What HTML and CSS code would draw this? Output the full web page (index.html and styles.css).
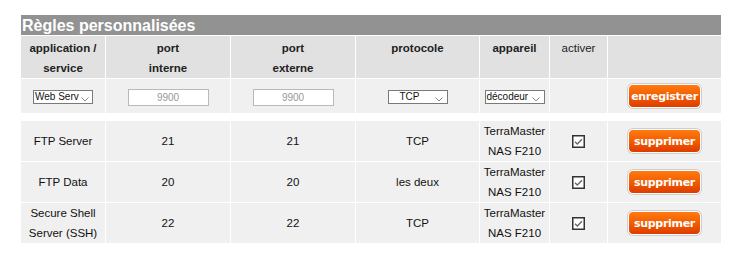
FILE: index.html
```html
<!DOCTYPE html>
<html lang="fr">
<head>
<meta charset="utf-8">
<title>Règles personnalisées</title>
<link rel="stylesheet" href="styles.css">
</head>
<body>
<div class="panel">
  <div class="panel-title">Règles personnalisées</div>
  <table class="rules rules-head">
    <colgroup>
      <col class="c-app"><col class="c-pin"><col class="c-pex"><col class="c-proto"><col class="c-dev"><col class="c-act"><col class="c-btn">
    </colgroup>
    <tr class="head-row">
      <th>application /<br>service</th>
      <th>port<br>interne</th>
      <th>port<br>externe</th>
      <th>protocole</th>
      <th>appareil</th>
      <th class="light">activer</th>
      <th></th>
    </tr>
    <tr class="input-row">
      <td><span class="select s-app"><span class="select-text">Web Serv</span><svg class="chev" viewBox="0 0 8 5" width="8" height="5"><path d="M0.5 0.5 L4 4 L7.5 0.5" fill="none" stroke="#8a8a8a" stroke-width="1"/></svg></span></td>
      <td><span class="port-input">9900</span></td>
      <td><span class="port-input">9900</span></td>
      <td><span class="select s-proto"><span class="select-text">TCP</span><svg class="chev" viewBox="0 0 8 5" width="8" height="5"><path d="M0.5 0.5 L4 4 L7.5 0.5" fill="none" stroke="#8a8a8a" stroke-width="1"/></svg></span></td>
      <td><span class="select s-dev"><span class="select-text">décodeur</span><svg class="chev" viewBox="0 0 8 5" width="8" height="5"><path d="M0.5 0.5 L4 4 L7.5 0.5" fill="none" stroke="#8a8a8a" stroke-width="1"/></svg></span></td>
      <td></td>
      <td><button class="btn">enregistrer</button></td>
    </tr>
  </table>
  <table class="rules rules-body">
    <colgroup>
      <col class="c-app"><col class="c-pin"><col class="c-pex"><col class="c-proto"><col class="c-dev"><col class="c-act"><col class="c-btn">
    </colgroup>
    <tr>
      <td>FTP Server</td><td>21</td><td>21</td><td>TCP</td><td>TerraMaster<br>NAS F210</td>
      <td><span class="check"><svg viewBox="0 0 13 13" width="13" height="13"><rect x="0.75" y="0.75" width="11.5" height="11.5" fill="#fff" stroke="#333" stroke-width="1.5"/><path d="M3 6.8 L5.3 9 L10 4.3" fill="none" stroke="#666" stroke-width="1.4"/></svg></span></td>
      <td><button class="btn">supprimer</button></td>
    </tr>
    <tr>
      <td>FTP Data</td><td>20</td><td>20</td><td>les deux</td><td>TerraMaster<br>NAS F210</td>
      <td><span class="check"><svg viewBox="0 0 13 13" width="13" height="13"><rect x="0.75" y="0.75" width="11.5" height="11.5" fill="#fff" stroke="#333" stroke-width="1.5"/><path d="M3 6.8 L5.3 9 L10 4.3" fill="none" stroke="#666" stroke-width="1.4"/></svg></span></td>
      <td><button class="btn">supprimer</button></td>
    </tr>
    <tr>
      <td>Secure Shell<br>Server (SSH)</td><td>22</td><td>22</td><td>TCP</td><td>TerraMaster<br>NAS F210</td>
      <td><span class="check"><svg viewBox="0 0 13 13" width="13" height="13"><rect x="0.75" y="0.75" width="11.5" height="11.5" fill="#fff" stroke="#333" stroke-width="1.5"/><path d="M3 6.8 L5.3 9 L10 4.3" fill="none" stroke="#666" stroke-width="1.4"/></svg></span></td>
      <td><button class="btn">supprimer</button></td>
    </tr>
  </table>
</div>
</body>
</html>
```

FILE: styles.css
```css
html, body {
  margin: 0;
  padding: 0;
  background: #fff;
}

body {
  font-family: "Liberation Sans", Arial, sans-serif;
  font-size: 11px;
  color: #111;
}

.panel {
  width: 700px;
  margin: 15px 0 0 21px;
}

.panel-title {
  height: 20px;
  line-height: 21px;
  background: #929292;
  color: #fff;
  font-weight: bold;
  font-size: 16px;
  padding-left: 1px;
  white-space: nowrap;
}

.rules {
  width: 702px;
  margin: 0 -1px;
  border-collapse: separate;
  border-spacing: 1px;
  table-layout: fixed;
}

.c-app { width: 84px; }
.c-pin { width: 124px; }
.c-pex { width: 124px; }
.c-proto { width: 123px; }
.c-dev { width: 69px; }
.c-act { width: 57px; }
.c-btn { width: 113px; }

.rules th,
.rules td {
  padding: 0;
  text-align: center;
  line-height: 20px;
}

.head-row th {
  background: #e1e1e1;
  height: 40px;
  padding-top: 2px;
  vertical-align: top;
  font-weight: bold;
  font-size: 11.5px;
  color: #222;
}

.head-row th.light {
  font-weight: normal;
}

.input-row td {
  background: #f0f0f0;
  height: 34px;
  vertical-align: middle;
}

.rules-body {
  margin-top: 6px;
}

.rules-body td {
  background: #f0f0f0;
  height: 40px;
  vertical-align: middle;
  color: #111;
  font-size: 11.5px;
}

.select {
  display: inline-flex;
  align-items: center;
  box-sizing: border-box;
  width: 60px;
  height: 14px;
  border: 1px solid #7a7a7a;
  background: #fff;
  vertical-align: middle;
  font-size: 10px;
  line-height: 12px;
  color: #111;
  overflow: hidden;
}

.select-text {
  flex: 1;
  white-space: nowrap;
  text-align: left;
  padding-left: 1px;
}

.s-proto .select-text {
  padding-left: 11px;
}

.chev {
  flex: none;
  margin: 5px 4px 0 2px;
}

.port-input {
  display: inline-block;
  box-sizing: border-box;
  width: 81px;
  height: 17px;
  border: 1px solid #b9b9b9;
  background: #fff;
  color: #999;
  font-size: 10px;
  line-height: 15px;
  text-align: center;
  vertical-align: middle;
}

.btn {
  box-sizing: border-box;
  width: 73px;
  height: 24px;
  padding: 0;
  border: 1px solid #fff;
  border-radius: 5px;
  box-shadow: 0 0 0 1px #cfcfcf;
  background: linear-gradient(#ff7a10, #f05a00 55%, #dd3c00);
  color: #fff;
  font-family: "DejaVu Sans", Verdana, sans-serif;
  font-weight: bold;
  font-size: 11px;
  letter-spacing: -0.3px;
  cursor: pointer;
  vertical-align: middle;
}

.check {
  display: inline-block;
  width: 13px;
  height: 13px;
  vertical-align: middle;
}

.check svg {
  display: block;
}
```
